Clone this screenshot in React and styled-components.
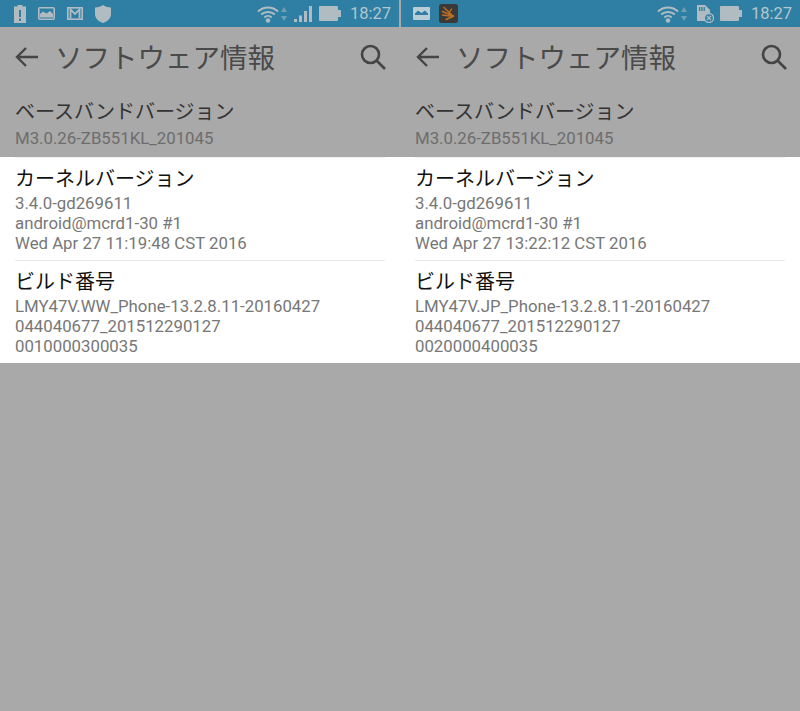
import React from 'react';
import styled, { createGlobalStyle } from 'styled-components';

const Global = createGlobalStyle`
  html, body { margin: 0; padding: 0; background: #a9a9a9; }
  #root { width: 800px; height: 711px; overflow: hidden; }
`;
const Page = styled.div`
  display: flex; justify-content: space-between; width: 800px; height: 711px; background: #a9a9a9;
`;
const Panel = styled.div`
  width: 399px; display: flex; flex-direction: column;
`;
const StatusBar = styled.div`
  height: 27px; background: #2e7fa3; display: flex; align-items: center; padding: 0 8px 0 ${p => p.$left}px;
  color: #b5c6cd; font: 16.5px Roboto, sans-serif; box-sizing: border-box;
`;
const Icons = styled.div`display: flex; align-items: center; gap: ${p => p.$gap}px;`;
const Right = styled.div`margin-left: auto; display: flex; align-items: center;`;
const Spacer = styled.span`width: ${p => p.$w}px; flex: none;`;
const Clock = styled.span`margin-left: 9px;`;
const ActionBar = styled.div`
  height: 63px; box-sizing: border-box; display: flex; align-items: center; padding: 0 12px 3px 15px; color: #454545;
`;
const Title = styled.h1`
  margin: 0 0 0 16px; font: 400 27.5px/1 "Noto Sans CJK JP", sans-serif; color: #4a4a4a; flex: 1;
  white-space: nowrap;
`;
const List = styled.div`
  margin: 0 ${p => p.$mr}px 0 ${p => p.$ml}px;
`;
const Item = styled.div`
  padding: ${p => p.$pad}; margin: 0 15px; height: ${p => p.$h}px; box-sizing: border-box;
  border-bottom: ${p => p.$line ? '1px solid #e8e8e8' : 'none'};
  border-top: ${p => p.$top ? '1px solid #f0f0f0' : 'none'};
`;
const White = styled.div`background: #fff; height: 206px;`;
const ItemTitle = styled.div`
  font: 400 20px/28px "Noto Sans CJK JP", sans-serif; white-space: nowrap; color: ${p => p.$dim ? '#333' : '#111'};
`;
const Sub = styled.div`
  font: 16.8px/19.8px Roboto, sans-serif; white-space: pre-line; color: ${p => p.$dim ? '#6d6d6d' : '#777'};
  margin-top: ${p => p.$dim ? 4 : 2}px;
`;

const Back = () => (
  <svg width="24" height="24" viewBox="0 0 24 24" fill="none" stroke="#454545" strokeWidth="2.4">
    <path d="M23 12H2M11 3l-9 9 9 9" />
  </svg>
);
const Search = () => (
  <svg width="28" height="28" viewBox="0 0 28 28" fill="none" stroke="#454545" strokeWidth="2.6">
    <circle cx="11.5" cy="11.5" r="8.5" /><path d="M17.5 17.5L26 26" />
  </svg>
);
const c = '#b0bcc2';
const Wifi = () => (
  <svg width="22" height="18" viewBox="0 0 22 18" fill="none" stroke={c} strokeWidth="2">
    <path d="M1 6.5C6.500 1 15.500 1 21 6.500M4.200 9.600c3.800-3.600 9.800-3.600 13.600 0M7.300 12.400c2.100-1.900 5.300-1.900 7.400 0" />
    <circle cx="11" cy="15.500" r="2.200" fill={c} stroke="none" />
  </svg>
);
const Arrows = () => (
  <svg width="6" height="14" viewBox="0 0 6 14" fill="#6f9fb5"><path d="M3 0l3 5H0zM0 9h6l-3 5z" /></svg>
);
const Signal = () => (
  <svg width="18" height="16" viewBox="0 0 18 16" fill={c}>
    <rect x="0" y="13" width="3" height="3" /><rect x="5" y="9.500" width="3" height="6.500" />
    <rect x="10" y="5" width="3" height="11" /><rect x="15" y="0" width="3" height="16" />
  </svg>
);
const Battery = () => (
  <svg width="22" height="15" viewBox="0 0 22 15" fill={c}>
    <rect x="0" y="0" width="19" height="15" rx="1" /><rect x="19" y="4" width="3" height="7" />
  </svg>
);
const BatteryAlert = () => (
  <svg width="12" height="18" viewBox="0 0 12 18">
    <path fill={c} d="M3.500 0h5v1.500H12V18H0V1.500h3.500z" />
    <path fill="#2e7fa3" d="M5 5h2v7H5zM5 13.500h2V16H5z" />
  </svg>
);
const Photo = () => (
  <svg width="17" height="13" viewBox="0 0 17 13">
    <rect x="0.800" y="0.800" width="15.400" height="11.400" rx="1" fill="#2e7fa3" stroke={c} strokeWidth="1.600" />
    <path fill={c} d="M2 10.500V7l3-2.500L8.500 6.500 12 4l3 3v3.500z" />
  </svg>
);
const Photo2 = () => (
  <svg width="17" height="13" viewBox="0 0 17 13">
    <rect width="17" height="13" rx="1" fill="#b9cdd6" />
    <path fill="#2e7fa3" d="M2 8V6.500L5 3.500 8.500 6 12 3.500l3 3V8z" />
  </svg>
);
const Mail = () => (
  <svg width="16" height="13" viewBox="0 0 16 13" fill="none" stroke={c} strokeWidth="1.600">
    <rect x="0.800" y="0.800" width="14.400" height="11.400" />
    <path d="M3.500 11.500V2.500L8 7l4.500-4.500v9" strokeWidth="1.800" />
  </svg>
);
const Shield = () => (
  <svg width="16" height="18" viewBox="0 0 16 18" fill={c}>
    <path d="M8 0c2 1.600 4.600 2.400 8 2.400V9c0 4-3.200 7.600-8 9-4.800-1.400-8-5-8-9V2.400C3.400 2.400 6 1.600 8 0z" />
  </svg>
);
const AppIcon = () => (
  <svg width="19" height="19" viewBox="0 0 19 19">
    <rect width="19" height="19" rx="2.500" fill="#3c3a38" />
    <path d="M14 12L5 3.500M14.500 12L3.500 7.500M14.500 12.500L3.500 11M14 12.500L7 15.500M10 9l2.500-4" stroke="#bb6f22" strokeWidth="1.400" fill="none" strokeLinecap="round" />
  </svg>
);
const Sd = () => (
  <svg width="18" height="18" viewBox="0 0 18 18">
    <path fill={c} d="M1 0h8l5 5v11H1z" />
    <path fill="#2e7fa3" d="M3 2h1.300v4H3zM5.300 2h1.300v4H5.300zM7.600 2h1.300v4H7.600z" />
    <circle cx="13" cy="13" r="4.500" fill="#2e7fa3" stroke={c} strokeWidth="1.300" />
    <path d="M11 11l4 4M15 11l-4 4" stroke={c} strokeWidth="1.200" />
  </svg>
);

const Device = ({ gap, pad, kernelDate, build, serial, statusLeft, statusRight, ml, mr }) => (
  <Panel>
    <StatusBar $left={pad}>
      <Icons $gap={gap}>{statusLeft}</Icons>
      <Right>{statusRight}<Clock>18:27</Clock></Right>
    </StatusBar>
    <ActionBar>
      <Back />
      <Title>ソフトウェア情報</Title>
      <Search />
    </ActionBar>
    <List $ml={ml} $mr={mr}>
      <Item $h={67} $pad="7px 0 0">
        <ItemTitle $dim>ベースバンドバージョン</ItemTitle>
        <Sub $dim>M3.0.26-ZB551KL_201045</Sub>
      </Item>
      <White>
        <Item $h={104} $line $top $pad="6px 0 0">
          <ItemTitle>カーネルバージョン</ItemTitle>
          <Sub>{`3.4.0-gd269611\nandroid@mcrd1-30 #1\nWed Apr 27 ${kernelDate} CST 2016`}</Sub>
        </Item>
        <Item $h={102} $pad="6px 0 0">
          <ItemTitle>ビルド番号</ItemTitle>
          <Sub>{`${build}\n044040677_201512290127\n${serial}`}</Sub>
        </Item>
      </White>
    </List>
  </Panel>
);

export default function App() {
  return (
    <Page>
      <Global />
      <Device
        gap={12} pad={14} ml={0} mr={-1}
        kernelDate="11:19:48" build="LMY47V.WW_Phone-13.2.8.11-20160427" serial="0010000300035"
        statusLeft={<><BatteryAlert /><Photo /><Mail /><Shield /></>}
        statusRight={<><Wifi /><Spacer $w={2} /><Arrows /><Spacer $w={7} /><Signal /><Spacer $w={7} /><Battery /></>}
      />
      <Device
        gap={9} pad={12} ml={-1} mr={0}
        kernelDate="13:22:12" build="LMY47V.JP_Phone-13.2.8.11-20160427" serial="0020000400035"
        statusLeft={<><Photo2 /><AppIcon /></>}
        statusRight={<><Wifi /><Spacer $w={2} /><Arrows /><Spacer $w={9} /><Sd /><Spacer $w={6} /><Battery /></>}
      />
    </Page>
  );
}
